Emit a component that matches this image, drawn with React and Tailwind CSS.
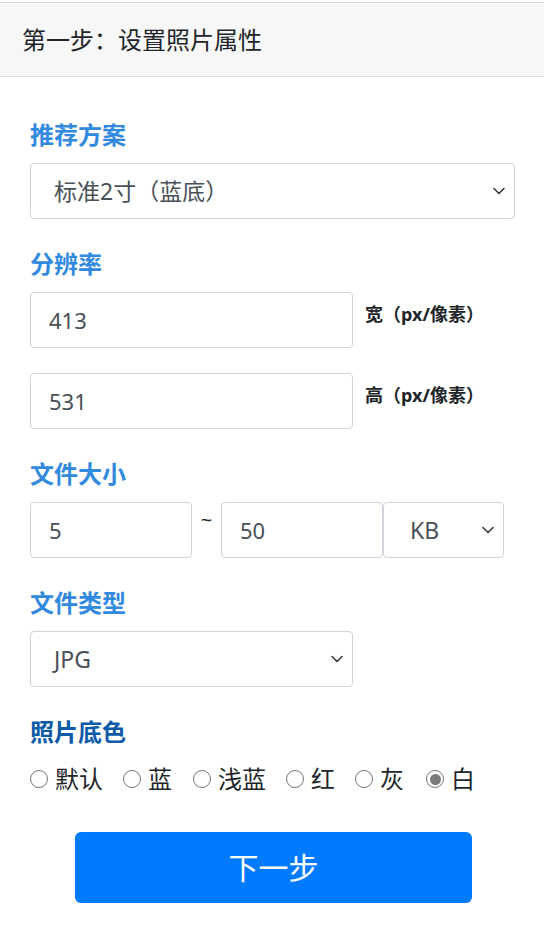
import React from "react";

const Chevron = () => (
    <svg width="16" height="16" viewBox="0 0 16 16" className="shrink-0">
        <path d="M3 5.5l5 5 5-5" fill="none" stroke="#343a40" strokeWidth="1.6" strokeLinecap="round" strokeLinejoin="round" />
    </svg>
);

function Select({ value, className }) {
    return (
        <div className={"flex h-[56px] items-center justify-between rounded-[4px] border border-[#ced4da] bg-white pl-[23px] pr-[7px] text-[23px] text-[#495057] " + className}>
            <span>{value}</span>
            <Chevron />
        </div>
    );
}

function Input({ value, className }) {
    return (
        <div className={"flex h-[56px] items-center rounded-[4px] border border-[#ced4da] bg-white px-[18px] text-[22px] text-[#495057] " + className}>
            {value}
        </div>
    );
}

function Label({ children, dark }) {
    return (
        <div className={"text-[24px] font-bold leading-[30px] " + (dark ? "text-[#0d5aa7]" : "text-[#3189e0]")}>
            {children}
        </div>
    );
}

const colors = [
    { name: "默认", w: "w-[93px]" },
    { name: "蓝", w: "w-[70px]" },
    { name: "浅蓝", w: "w-[93px]" },
    { name: "红", w: "w-[69px]" },
    { name: "灰", w: "w-[71px]" },
    { name: "白", w: "w-[70px]", checked: true },
];

export default function App() {
    return (
        <div className="min-h-screen bg-white pt-[2px] font-['Noto_Sans','Noto_Sans_CJK_SC',sans-serif] text-[#212529]">
            <div className="border-y border-[#dcdcdc] bg-[#f7f7f7] px-[22px] h-[75px] flex items-center text-[24px]">
                第一步：设置照片属性
            </div>

            <div className="pl-[30px] pr-[29px] pt-[43px]">
                <Label>推荐方案</Label>
                <Select value="标准2寸（蓝底）" className="mt-[13px] w-full" />

                <div className="mt-[30px]">
                    <Label>分辨率</Label>
                </div>
                <div className="mt-[13px] flex gap-[12px]">
                    <Input value="413" className="w-[323px]" />
                    <div className="mt-[11px] text-[18px] font-bold leading-[22px]">宽（px/像素）</div>
                </div>
                <div className="mt-[25px] flex gap-[12px]">
                    <Input value="531" className="w-[323px]" />
                    <div className="mt-[11px] text-[18px] font-bold leading-[22px]">高（px/像素）</div>
                </div>

                <div className="mt-[30px]">
                    <Label>文件大小</Label>
                </div>
                <div className="mt-[13px] flex items-start">
                    <Input value="5" className="w-[162px]" />
                    <div className="w-[29px] pt-[6px] text-center text-[20px] leading-[24px]">~</div>
                    <Input value="50" className="w-[162px]" />
                    <Select value="KB" className="w-[121px] pl-[26px]" />
                </div>

                <div className="mt-[30px]">
                    <Label>文件类型</Label>
                </div>
                <Select value="JPG" className="mt-[13px] w-[323px]" />

                <div className="mt-[30px]">
                    <Label dark>照片底色</Label>
                </div>
                <div className="mt-[17px] flex h-[30px] items-center">
                    {colors.map((c) => (
                        <label key={c.name} className={"flex items-center gap-[7px] text-[24px] leading-[30px] " + c.w}>
                            <span className="flex h-[18px] w-[18px] shrink-0 items-center justify-center rounded-full border border-[#767676] bg-white">
                                {c.checked && <span className="h-[11px] w-[11px] rounded-full bg-[#7a7a7a]" />}
                            </span>
                            <span>{c.name}</span>
                        </label>
                    ))}
                </div>

                <div className="mt-[38px] pl-[45px]">
                    <button className="flex h-[71px] w-[397px] items-center justify-center rounded-[6px] bg-[#007bff] text-[30px] text-white">
                        下一步
                    </button>
                </div>
            </div>
        </div>
    );
}
